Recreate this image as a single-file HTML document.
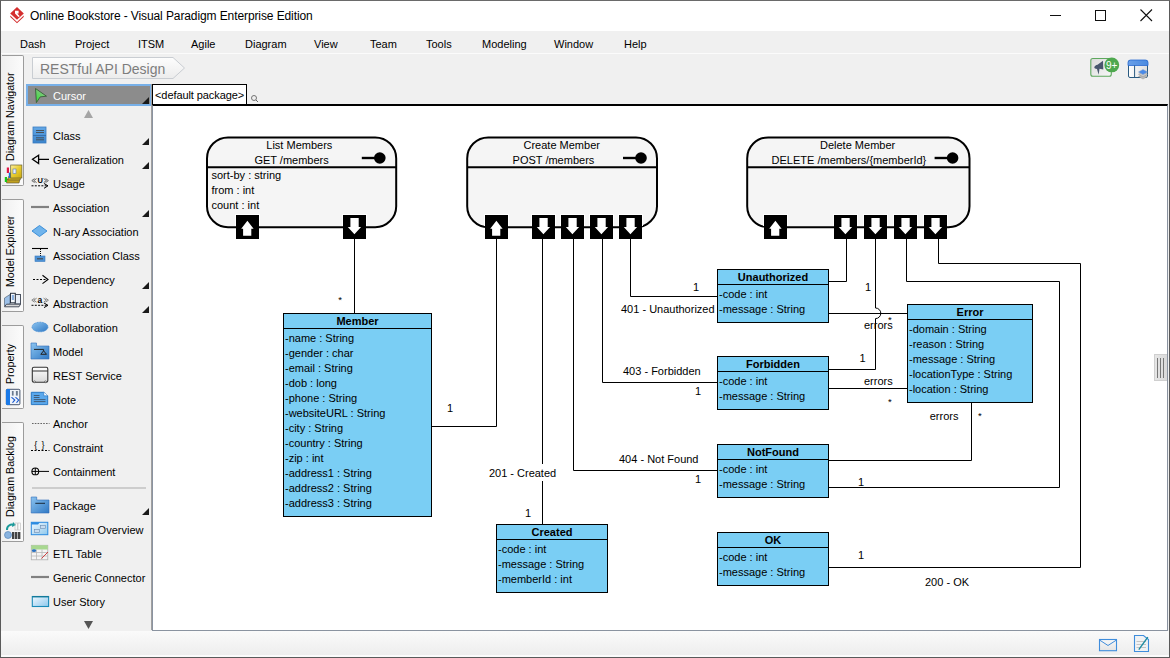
<!DOCTYPE html>
<html><head><meta charset="utf-8">
<style>
*{margin:0;padding:0;box-sizing:border-box}
html,body{width:1170px;height:658px;overflow:hidden;background:#f0f0f0;font-family:"Liberation Sans",sans-serif;color:#000}
.a{position:absolute;white-space:nowrap}
#frame{position:absolute;left:0;top:0;width:1170px;height:658px;border:1px solid #5a5a5a;border-top-color:#6a6a6a}
#title{left:1px;top:1px;width:1168px;height:30px;background:#fff}
.menu{font-size:11px;top:38px}
.pal{font-size:11px;left:53px;line-height:13px}
.tab{position:absolute;left:2px;width:22px;background:linear-gradient(90deg,#f0f0f0,#fbfbfb);border:1px solid #9c9c9c;border-left:none;border-radius:0 2px 2px 0}
.vt{position:absolute;font-size:11px;transform-origin:0 0;transform:rotate(-90deg) scaleX(0.965)}
.tri{position:absolute;width:0;height:0;border-left:7px solid transparent;border-bottom:7px solid #1a1a1a;left:142px}
</style></head><body>
<div id="title" class="a"></div>
<div id="frame"></div>

<!-- title text -->
<svg class="a" style="left:0;top:0" width="30" height="30">
 <path d="M17 7 L23.8 13.4 L17 19.8 L10.2 13.4 Z" fill="#d42e2e"/>
 <path d="M10.3 15.6 L17 21.9 L23.7 15.6 L23.7 17 L17 23.3 L10.3 17 Z" fill="#d42e2e"/>
 <path d="M15 10.8 H18.6 V13.4 H17.2 L19.8 16.2 L18.4 17 L15 13.6 Z" fill="#fff"/>
</svg>
<div class="a" style="left:30px;top:9px;font-size:12px;color:#000;letter-spacing:-0.1px">Online Bookstore - Visual Paradigm Enterprise Edition</div>

<!-- window controls -->
<div class="a" style="left:1050px;top:15px;width:11px;height:1px;background:#111"></div>
<div class="a" style="left:1095px;top:10px;width:11px;height:11px;border:1px solid #111"></div>
<svg class="a" style="left:1140px;top:9px" width="13" height="13"><path d="M0.5 0.5 L12 12 M12 0.5 L0.5 12" stroke="#111" stroke-width="1.1"/></svg>

<!-- menu -->
<div class="a menu" style="left:20px">Dash</div>
<div class="a menu" style="left:75px">Project</div>
<div class="a menu" style="left:138px">ITSM</div>
<div class="a menu" style="left:191px">Agile</div>
<div class="a menu" style="left:245px">Diagram</div>
<div class="a menu" style="left:314px">View</div>
<div class="a menu" style="left:370px">Team</div>
<div class="a menu" style="left:426px">Tools</div>
<div class="a menu" style="left:482px">Modeling</div>
<div class="a menu" style="left:554px">Window</div>
<div class="a menu" style="left:624px">Help</div>
<div class="a" style="left:1px;top:53px;width:1168px;height:1px;background:#fbfbfb"></div>

<!-- breadcrumb -->
<svg class="a" style="left:30px;top:56px" width="170" height="26">
 <defs><linearGradient id="bcg" x1="0" y1="0" x2="0" y2="1"><stop offset="0" stop-color="#fdfdfd"/><stop offset="1" stop-color="#ececec"/></linearGradient></defs>
 <path d="M2.5 1.5 H143 L154.5 12 L143 22.5 H2.5 Z" fill="url(#bcg)" stroke="#c9cdd2"/>
</svg>
<div class="a" style="left:40px;top:61px;font-size:14px;color:#7d7d7d">RESTful API Design</div>

<!-- top right icons -->
<svg class="a" style="left:1080px;top:50px" width="80" height="32">
 <defs>
  <linearGradient id="mg" x1="0" y1="0" x2="1" y2="1"><stop offset="0" stop-color="#dcdcdc"/><stop offset="1" stop-color="#f6f6f6"/></linearGradient>
  <linearGradient id="tb" x1="0" y1="0" x2="1" y2="0"><stop offset="0" stop-color="#6aa0e8"/><stop offset="1" stop-color="#4a8ae0"/></linearGradient>
  <linearGradient id="wb" x1="0" y1="0" x2="1" y2="0"><stop offset="0" stop-color="#ffffff"/><stop offset="1" stop-color="#dedede"/></linearGradient>
 </defs>
 <rect x="10.8" y="8.5" width="20.5" height="17.8" rx="2" fill="url(#mg)" stroke="#5ea85e" stroke-width="1.1"/>
 <path d="M14.3 17.6 C14.3 15.8 16 15.2 17.5 14.8 L23 10.8 L23.3 19.6 L19.5 18.8 L18.6 24.8 L17 19 C15.5 18.8 14.3 18.6 14.3 17.6 Z" fill="#48566e"/>
 <circle cx="31.8" cy="14.9" r="7.4" fill="#4ea84e"/>
 <text x="31.6" y="18.6" font-size="10" fill="#fff" text-anchor="middle" font-family="Liberation Sans">9+</text>
 <rect x="48.5" y="10.5" width="19" height="17" rx="1.5" fill="url(#wb)" stroke="#2a5a80" stroke-width="1"/>
 <path d="M48 15.5 V12.5 Q48 10 50.5 10 H65.5 Q68 10 68 12.5 V15.5 Z" fill="url(#tb)" stroke="#2a6ad0" stroke-width="0.8"/>
 <line x1="54.6" y1="15.5" x2="54.6" y2="28" stroke="#2a5a80" stroke-width="1"/>
 <path d="M58.5 26.5 l4.5-2.5 4.5 2.5 -4.5 2.5z" fill="#b8b8b8" stroke="#999" stroke-width="0.5"/>
 <path d="M58.5 24.3 l4.5-2.5 4.5 2.5 -4.5 2.5z" fill="#c8c8c8" stroke="#999" stroke-width="0.5"/>
 <path d="M58.5 22 l4.5-2.5 4.5 2.5 -4.5 2.5z" fill="#4a8ae8" stroke="#7a9ac8" stroke-width="0.5"/>
</svg>

<!-- left vertical tabs -->
<div class="tab" style="top:55px;height:131px"></div>
<div class="vt" style="left:4px;top:161px">Diagram Navigator</div>
<div class="tab" style="top:199px;height:113px"></div>
<div class="vt" style="left:4px;top:287px">Model Explorer</div>
<div class="tab" style="top:325px;height:84px"></div>
<div class="vt" style="left:4px;top:384px">Property</div>
<div class="tab" style="top:422px;height:120px"></div>
<div class="vt" style="left:4px;top:517px">Diagram Backlog</div>
<svg class="a" style="left:0;top:0" width="26" height="545">
<!-- navigator -->
<defs><linearGradient id="yb" x1="0" y1="0" x2="1" y2="1"><stop offset="0" stop-color="#fff2a0"/><stop offset="0.5" stop-color="#e8cc30"/><stop offset="1" stop-color="#c8a810"/></linearGradient></defs>
<path d="M7 179 H20 L19 183 H6.5 Z" fill="#c0a020" stroke="#5a5030" stroke-width="0.6"/>
<path d="M8.5 176.5 H21 L20 180 H8 Z" fill="#d0b020" stroke="#5a5030" stroke-width="0.6"/>
<rect x="4.8" y="177" width="2.2" height="5" fill="#18c818"/>
<rect x="6.8" y="167.5" width="2.2" height="5.5" fill="#e01848"/>
<rect x="8.8" y="172.6" width="2.2" height="5.4" fill="#1870e0"/>
<rect x="10.7" y="165" width="11.2" height="13" fill="url(#yb)" stroke="#6a6030" stroke-width="0.7"/>
<rect x="13" y="169" width="3" height="4.6" fill="#e8f0ff" stroke="#5a7ab0" stroke-width="0.6"/>
<!-- model explorer -->
<path d="M4.5 298 L10 294.5 L10 304 L4.5 306 Z" fill="#9cc0e8" stroke="#55657a" stroke-width="0.7"/>
<rect x="15" y="294.5" width="5.5" height="9.5" fill="#e8eef6" stroke="#3a4250" stroke-width="0.9"/>
<rect x="10.5" y="293.3" width="4.8" height="9.5" fill="#f4f8fc" stroke="#2a3240" stroke-width="1"/>
<rect x="11.8" y="295" width="2.2" height="5" fill="#8ab0e0"/>
<path d="M4.5 306.8 L6.5 304.2 H20.5 L19 306.8 Z" fill="#d8d8d8" stroke="#3a4250" stroke-width="0.9"/>
<!-- property -->
<rect x="6.3" y="389.3" width="13.6" height="15.4" rx="1" fill="#f0f4fa" stroke="#34445e" stroke-width="0.9"/>
<path d="M7.5 389 H10 V405 H7.5 Q6 405 6 403.5 V390.5 Q6 389 7.5 389 Z" fill="#1a7ae8"/>
<rect x="11.9" y="391" width="1.7" height="4.6" fill="#6a7a90"/>
<rect x="15.9" y="391" width="1.9" height="4.6" fill="#6a7a90"/>
<path d="M10.6 397.2 L14 400 L11.8 402.8 H13.2 L15.6 400 L12.4 397.2 Z" fill="#1a5ad0"/>
<path d="M14.6 397.2 L18 400 L15.8 402.8 H17.2 L19.4 400 L16.4 397.2 Z" fill="#1a5ad0"/>
<!-- backlog -->
<path d="M7 530 a5 5 0 0 1 7 -5" fill="none" stroke="#1a9a9a" stroke-width="2"/>
<path d="M13 522 l3 3 -4 2z" fill="#1a9a9a"/>
<circle cx="8" cy="535" r="3.5" fill="#8ab4e0" stroke="#4a7ab0" stroke-width="0.6"/>
<rect x="12" y="532" width="2.4" height="7" fill="#444"/><rect x="15" y="532" width="2.4" height="7" fill="#444"/><rect x="18" y="532" width="2.4" height="7" fill="#444"/>
<rect x="15" y="523" width="2.4" height="7" fill="none" stroke="#bbb" stroke-width="0.6"/><rect x="18" y="523" width="2.4" height="7" fill="none" stroke="#bbb" stroke-width="0.6"/>
</svg>

<!-- palette -->
<div class="a" style="left:26px;top:84px;width:126px;height:22px;background:#8c8c8c;border:2px solid #78b0e8"></div>
<svg class="a" style="left:0;top:0" width="60" height="110">
 <defs><linearGradient id="cg" x1="0" y1="1" x2="0.6" y2="0"><stop offset="0" stop-color="#2ee82e"/><stop offset="1" stop-color="#8fbf8f"/></linearGradient></defs>
 <path d="M35.5 88.5 L46.5 96.2 L40.2 96.9 L36.4 102.6 Z" fill="url(#cg)" stroke="#3a5a3a" stroke-width="0.9" stroke-linejoin="round"/>
</svg>
<div class="a pal" style="top:90px;color:#fff">Cursor</div>
<div class="tri" style="top:97px"></div>
<svg class="a" style="left:84px;top:110px" width="9" height="8"><path d="M0 8 L4.5 0 L9 8Z" fill="#a5a5a5"/></svg>

<div class="a pal" style="top:130px">Class</div>
<div class="tri" style="top:138px"></div>
<div class="a pal" style="top:154px">Generalization</div>
<div class="tri" style="top:162px"></div>
<div class="a pal" style="top:178px">Usage</div>
<div class="a pal" style="top:202px">Association</div>
<div class="tri" style="top:210px"></div>
<div class="a pal" style="top:226px">N-ary Association</div>
<div class="a pal" style="top:250px">Association Class</div>
<div class="a pal" style="top:274px">Dependency</div>
<div class="tri" style="top:282px"></div>
<div class="a pal" style="top:298px">Abstraction</div>
<div class="tri" style="top:306px"></div>
<div class="a pal" style="top:322px">Collaboration</div>
<div class="a pal" style="top:346px">Model</div>
<div class="a pal" style="top:370px">REST Service</div>
<div class="a pal" style="top:394px">Note</div>
<div class="a pal" style="top:418px">Anchor</div>
<div class="a pal" style="top:442px">Constraint</div>
<div class="a pal" style="top:466px">Containment</div>
<div class="a pal" style="top:500px">Package</div>
<div class="tri" style="top:508px"></div>
<div class="a pal" style="top:524px">Diagram Overview</div>
<div class="a pal" style="top:548px">ETL Table</div>
<div class="a pal" style="top:572px">Generic Connector</div>
<div class="a pal" style="top:596px">User Story</div>
<div class="a" style="left:32px;top:487px;width:114px;height:2px;background:#cdcdcd"></div>
<svg class="a" style="left:84px;top:621px" width="9" height="8"><path d="M0 0 L9 0 L4.5 8Z" fill="#555"/></svg>
<div class="a" style="left:151px;top:84px;width:1px;height:546px;background:#a0a0a0"></div>
<svg class="a" style="left:0;top:0" width="60" height="640">
<defs>
<linearGradient id="gb" x1="0" y1="0" x2="1" y2="1"><stop offset="0" stop-color="#8cc4f0"/><stop offset="1" stop-color="#2f78c4"/></linearGradient>
<linearGradient id="gcls" x1="0" y1="0" x2="0" y2="1"><stop offset="0" stop-color="#64a8e6"/><stop offset="1" stop-color="#3a84cc"/></linearGradient>
<linearGradient id="gus" x1="0" y1="0" x2="1" y2="1"><stop offset="0" stop-color="#f0f8ff"/><stop offset="1" stop-color="#8ec8ec"/></linearGradient>
<linearGradient id="grest" x1="0" y1="0" x2="0" y2="1"><stop offset="0" stop-color="#ffffff"/><stop offset="1" stop-color="#d8d8d8"/></linearGradient>
</defs>
<!-- Class -->
<rect x="33" y="127" width="13" height="16" fill="url(#gcls)" stroke="#3a7cc0" stroke-width="0.8"/>
<line x1="33" y1="135.5" x2="46" y2="135.5" stroke="#2f6aa8" stroke-width="0.8"/>
<path d="M36 130.5 H44 M36 132.5 H44 M36 137.8 H44 M36 139.8 H44" stroke="#4a4a4a" stroke-width="0.9"/>
<!-- Generalization -->
<path d="M38.6 155.2 L32.5 159.3 L38.6 163.5 Z M38.6 159.3 H49" fill="none" stroke="#000" stroke-width="1.3"/>
<!-- Usage -->
<path d="M34.6 178.6 L31.8 180.6 L34.6 182.6 M36.6 178.6 L33.8 180.6 L36.6 182.6 M43.6 178.6 L46.4 180.6 L43.6 182.6 M45.6 178.6 L48.4 180.6 L45.6 182.6" fill="none" stroke="#555" stroke-width="0.9"/>
<text x="37.4" y="183" font-family="Liberation Sans" font-size="7.5" font-weight="bold" fill="#000">U</text>
<path d="M31.5 185.8 H47" stroke="#000" stroke-width="1" stroke-dasharray="2 1.3"/>
<path d="M44 183.5 L48 185.8 L44 188.3" fill="none" stroke="#000" stroke-width="1"/>
<!-- Association -->
<line x1="31" y1="207" x2="49" y2="207" stroke="#808080" stroke-width="2.2"/>
<!-- N-ary -->
<path d="M39.5 225.5 L47 231 L39.5 236.5 L32 231 Z" fill="#70b4ec" stroke="#3d8fd8" stroke-width="1"/>
<!-- Association Class -->
<line x1="32" y1="248.5" x2="48" y2="248.5" stroke="#000" stroke-width="1.1"/>
<path d="M40.5 249 V256" stroke="#000" stroke-width="1" stroke-dasharray="1 1"/>
<rect x="35" y="256" width="10" height="5.5" fill="#4d92d6" stroke="#3a7cc0" stroke-width="0.6"/>
<line x1="37" y1="258.8" x2="43" y2="258.8" stroke="#444" stroke-width="1.1"/>
<!-- Dependency -->
<path d="M33 279.5 H47.5" stroke="#000" stroke-width="1" stroke-dasharray="2 1.5"/>
<path d="M42.5 275.3 L48 279.5 L42.5 283.6" fill="none" stroke="#000" stroke-width="1.1"/>
<!-- Abstraction -->
<path d="M34.6 298.2 L31.8 300.2 L34.6 302.2 M36.6 298.2 L33.8 300.2 L36.6 302.2 M43.6 298.2 L46.4 300.2 L43.6 302.2 M45.6 298.2 L48.4 300.2 L45.6 302.2" fill="none" stroke="#777" stroke-width="0.9"/>
<text x="37.5" y="302.8" font-family="Liberation Sans" font-size="8.5" font-weight="bold" fill="#000">a</text>
<path d="M31.5 305.3 H47" stroke="#000" stroke-width="1" stroke-dasharray="2 1.3"/>
<path d="M44 303 L48 305.3 L44 307.6" fill="none" stroke="#000" stroke-width="1"/>
<!-- Collaboration -->
<ellipse cx="40" cy="327" rx="8" ry="4.8" fill="url(#gb)" stroke="#3a85d0" stroke-width="0.8" stroke-dasharray="1 0.6"/>
<!-- Model -->
<path d="M31 343 H36.5 V346 H49 V359 H31 Z" fill="url(#gb)" stroke="#2f6db8" stroke-width="0.6"/>
<path d="M34 349.4 H43.6 V351" fill="none" stroke="#222" stroke-width="1"/>
<path d="M43.6 350.8 L46.5 354.3 H40.8 Z" fill="none" stroke="#222" stroke-width="1"/>
<!-- REST Service -->
<rect x="32.3" y="367.3" width="15.5" height="15" rx="1.6" fill="url(#grest)" stroke="#333" stroke-width="1.1"/>
<line x1="32.3" y1="371" x2="47.8" y2="371" stroke="#333" stroke-width="1"/>
<circle cx="34.5" cy="381.8" r="0.9" fill="#fff" stroke="#333" stroke-width="0.6"/>
<circle cx="45.5" cy="381.8" r="0.9" fill="#fff" stroke="#333" stroke-width="0.6"/>
<!-- Note -->
<path d="M31.3 392.3 H43.8 L47.7 395.8 V404.6 H31.3 Z" fill="#5aa8ec" stroke="#1e6fc0" stroke-width="0.9"/>
<path d="M43.8 392.3 V395.8 H47.7" fill="#fff" stroke="#1e6fc0" stroke-width="0.6"/>
<path d="M33.8 395.5 H39.5 M33.8 397.5 H39.5 M33.8 399.6 H45.5 M33.8 401.6 H45.5" stroke="#3c4a5a" stroke-width="0.8"/>
<!-- Anchor -->
<path d="M32 423.5 H49.5" stroke="#555" stroke-width="0.9" stroke-dasharray="1.6 1.2"/>
<!-- Constraint -->
<text x="34.3" y="447.8" font-family="Liberation Sans" font-size="9" fill="#000">{</text>
<text x="41.5" y="447.8" font-family="Liberation Sans" font-size="9" fill="#000">}</text>
<path d="M31 450.5 H49.5" stroke="#000" stroke-width="1" stroke-dasharray="2 1.5"/>
<!-- Containment -->
<circle cx="35.3" cy="471.4" r="3.4" fill="none" stroke="#000" stroke-width="1.1"/>
<path d="M31.9 471.4 H38.7 M35.3 468 V474.8 M38.7 471.4 H49" stroke="#000" stroke-width="1"/>
<!-- Package -->
<path d="M31.2 497 H36.7 V500 H49 V513 H31.2 Z" fill="url(#gb)" stroke="#2f6db8" stroke-width="0.6"/>
<line x1="35.3" y1="503.3" x2="45" y2="503.3" stroke="#1a2a3a" stroke-width="1"/>
<!-- Diagram Overview -->
<rect x="31.3" y="522.3" width="16.5" height="12.4" fill="url(#gus)" stroke="#2a8ae0" stroke-width="1"/>
<path d="M31.3 522.3 H40 L38 524.5 H31.3 Z" fill="#2a8ae0"/>
<rect x="40.5" y="525.6" width="5" height="3" fill="#c8dcf0" stroke="#6a8ab0" stroke-width="0.6"/>
<rect x="34.5" y="529.6" width="5" height="3" fill="#c8dcf0" stroke="#6a8ab0" stroke-width="0.6"/>
<!-- ETL Table -->
<rect x="31.3" y="545.3" width="16.5" height="14.5" fill="#f4f4f4" stroke="#b0b0b0" stroke-width="0.8"/>
<rect x="31.3" y="545.3" width="16.5" height="4.2" fill="#a8d890"/>
<path d="M31.3 552.5 H47.8 M31.3 556 H47.8 M36.5 549.5 V559.8 M42 549.5 V559.8" stroke="#b8b8b8" stroke-width="0.8"/>
<ellipse cx="34" cy="550.7" rx="2.2" ry="1.4" fill="#2a70c0"/>
<path d="M41.5 558.5 L48 552" stroke="#d04040" stroke-width="1"/>
<!-- Generic Connector -->
<line x1="31" y1="577" x2="49" y2="577" stroke="#808080" stroke-width="2.2"/>
<!-- User Story -->
<rect x="32.3" y="596.5" width="16.3" height="10" fill="url(#gus)" stroke="#1a8ab8" stroke-width="1.1"/>
<line x1="32.3" y1="596.7" x2="48.6" y2="596.7" stroke="#137a9a" stroke-width="1.4"/>
</svg>

<!-- canvas -->
<div class="a" style="left:152px;top:104px;width:1016px;height:527px;background:#fff;border-left:1px solid #8a93a0;border-right:1px solid #8a93a0;border-bottom:1px solid #8a93a0;border-top:2px solid #000"></div>
<div class="a" style="left:152px;top:84px;width:95px;height:21px;background:#fff;border:1.5px solid #000;font-size:11px;padding:4px 0 0 2px;letter-spacing:-0.08px">&lt;default package&gt;</div>
<svg class="a" style="left:250px;top:94px" width="9" height="9"><circle cx="4" cy="4" r="2.5" fill="none" stroke="#666" stroke-width="0.9"/><path d="M6 6 L8 8" stroke="#666"/></svg>

<!-- scrollbar grip -->
<div class="a" style="left:1154px;top:354px;width:13px;height:27px;background:linear-gradient(90deg,#e6e6e6,#dadada);border:1px solid #cfcfcf;border-right:none"></div><div class="a" style="left:1157px;top:358px;width:1px;height:20px;background:#777"></div><div class="a" style="left:1160px;top:358px;width:1px;height:20px;background:#777"></div><div class="a" style="left:1163px;top:358px;width:1px;height:20px;background:#777"></div>

<div class="a" style="left:1px;top:631px;width:1168px;height:25px;background:linear-gradient(#fafafa,#ededed)"></div>
<div class="a" style="left:1px;top:655px;width:1168px;height:2px;background:#fbfbfb"></div>
<!-- status icons -->
<svg class="a" style="left:1098px;top:638px" width="20" height="15"><defs><linearGradient id="ml" x1="0" y1="0" x2="0" y2="1"><stop offset="0" stop-color="#f8f8f8"/><stop offset="1" stop-color="#e4e4e4"/></linearGradient></defs><rect x="1.5" y="1.5" width="17" height="11.2" fill="url(#ml)" stroke="#3f8ddc" stroke-width="1.1"/><path d="M1.5 2 L10 7.5 L18.5 2" fill="none" stroke="#3f8ddc" stroke-width="1"/></svg>
<svg class="a" style="left:1133px;top:634px" width="18" height="19"><path d="M1.5 1.5 H10.5 L15.5 5.5 V17.5 H1.5Z" fill="#f0f2f4" stroke="#3f8ddc" stroke-width="1.1"/><path d="M3.5 7.5 H13 M3.5 10.5 H13 M3.5 13.5 H13" stroke="#c4c4c4" stroke-width="1.2"/><path d="M5.8 15.6 L14.8 3.2" stroke="#1a8aa0" stroke-width="1.4"/></svg>

<svg class="a" style="left:0;top:0" width="1170" height="658"><rect x="207" y="137.4" width="189.2" height="89.79999999999998" rx="21" ry="21" fill="#f5f5f5" stroke="#000" stroke-width="2"/>
<line x1="207" y1="167.3" x2="396.2" y2="167.3" stroke="#000" stroke-width="2"/>
<text x="266.3" y="148.7" font-family="Liberation Sans" font-size="11" fill="#000" text-anchor="start" >List Members</text>
<text x="254.4" y="163.6" font-family="Liberation Sans" font-size="11" fill="#000" text-anchor="start" >GET /members</text>
<line x1="361.8" y1="158" x2="379.8" y2="158" stroke="#000" stroke-width="2.4"/>
<circle cx="379.8" cy="158" r="5.8" fill="#000"/>
<text x="211.5" y="179" font-family="Liberation Sans" font-size="11" fill="#000" text-anchor="start" >sort-by : string</text>
<text x="211.5" y="194" font-family="Liberation Sans" font-size="11" fill="#000" text-anchor="start" >from : int</text>
<text x="211.5" y="209" font-family="Liberation Sans" font-size="11" fill="#000" text-anchor="start" >count : int</text>
<rect x="467.2" y="137.4" width="189.8" height="89.79999999999998" rx="21" ry="21" fill="#f5f5f5" stroke="#000" stroke-width="2"/>
<line x1="467.2" y1="167.3" x2="657" y2="167.3" stroke="#000" stroke-width="2"/>
<text x="523.5" y="148.7" font-family="Liberation Sans" font-size="11" fill="#000" text-anchor="start" >Create Member</text>
<text x="512.6" y="163.6" font-family="Liberation Sans" font-size="11" fill="#000" text-anchor="start" >POST /members</text>
<line x1="623" y1="158" x2="641" y2="158" stroke="#000" stroke-width="2.4"/>
<circle cx="641" cy="158" r="5.8" fill="#000"/>
<rect x="747.2" y="137.4" width="222.29999999999995" height="89.79999999999998" rx="21" ry="21" fill="#f5f5f5" stroke="#000" stroke-width="2"/>
<line x1="747.2" y1="167.3" x2="969.5" y2="167.3" stroke="#000" stroke-width="2"/>
<text x="820" y="148.7" font-family="Liberation Sans" font-size="11" fill="#000" text-anchor="start" >Delete Member</text>
<text x="771.6" y="163.6" font-family="Liberation Sans" font-size="11" fill="#000" text-anchor="start" >DELETE /members/{memberId}</text>
<line x1="934.6" y1="158" x2="952.6" y2="158" stroke="#000" stroke-width="2.4"/>
<circle cx="952.6" cy="158" r="5.8" fill="#000"/>
<rect x="235" y="214" width="25" height="12" fill="#fff"/>
<rect x="236" y="215" width="23" height="24" fill="#000"/>
<path d="M247.4 220.8 L253.6 228.7 L251.3 228.7 L251.3 235.7 L243.1 235.7 L243.1 228.7 L241.2 228.7 Z" fill="#fff"/>
<rect x="342" y="214" width="25" height="12" fill="#fff"/>
<rect x="343" y="215" width="23" height="24" fill="#000"/>
<path d="M350.4 218 L358.7 218 L358.7 227 L361.1 227 L354.4 234.2 L347.8 227 L350.4 227 Z" fill="#fff"/>
<rect x="484" y="214" width="25" height="12" fill="#fff"/>
<rect x="485" y="215" width="23" height="24" fill="#000"/>
<path d="M496.4 220.8 L502.6 228.7 L500.3 228.7 L500.3 235.7 L492.1 235.7 L492.1 228.7 L490.2 228.7 Z" fill="#fff"/>
<rect x="531" y="214" width="25" height="12" fill="#fff"/>
<rect x="532" y="215" width="23" height="24" fill="#000"/>
<path d="M539.4 218 L547.7 218 L547.7 227 L550.1 227 L543.4 234.2 L536.8 227 L539.4 227 Z" fill="#fff"/>
<rect x="560" y="214" width="25" height="12" fill="#fff"/>
<rect x="561" y="215" width="23" height="24" fill="#000"/>
<path d="M568.4 218 L576.7 218 L576.7 227 L579.1 227 L572.4 234.2 L565.8 227 L568.4 227 Z" fill="#fff"/>
<rect x="589" y="214" width="25" height="12" fill="#fff"/>
<rect x="590" y="215" width="23" height="24" fill="#000"/>
<path d="M597.4 218 L605.7 218 L605.7 227 L608.1 227 L601.4 234.2 L594.8 227 L597.4 227 Z" fill="#fff"/>
<rect x="618" y="214" width="25" height="12" fill="#fff"/>
<rect x="619" y="215" width="23" height="24" fill="#000"/>
<path d="M626.4 218 L634.7 218 L634.7 227 L637.1 227 L630.4 234.2 L623.8 227 L626.4 227 Z" fill="#fff"/>
<rect x="763" y="214" width="25" height="12" fill="#fff"/>
<rect x="764" y="215" width="23" height="24" fill="#000"/>
<path d="M775.4 220.8 L781.6 228.7 L779.3 228.7 L779.3 235.7 L771.1 235.7 L771.1 228.7 L769.2 228.7 Z" fill="#fff"/>
<rect x="833" y="214" width="25" height="12" fill="#fff"/>
<rect x="834" y="215" width="23" height="24" fill="#000"/>
<path d="M841.4 218 L849.7 218 L849.7 227 L852.1 227 L845.4 234.2 L838.8 227 L841.4 227 Z" fill="#fff"/>
<rect x="863" y="214" width="25" height="12" fill="#fff"/>
<rect x="864" y="215" width="23" height="24" fill="#000"/>
<path d="M871.4 218 L879.7 218 L879.7 227 L882.1 227 L875.4 234.2 L868.8 227 L871.4 227 Z" fill="#fff"/>
<rect x="893" y="214" width="25" height="12" fill="#fff"/>
<rect x="894" y="215" width="23" height="24" fill="#000"/>
<path d="M901.4 218 L909.7 218 L909.7 227 L912.1 227 L905.4 234.2 L898.8 227 L901.4 227 Z" fill="#fff"/>
<rect x="923" y="214" width="25" height="12" fill="#fff"/>
<rect x="924" y="215" width="23" height="24" fill="#000"/>
<path d="M931.4 218 L939.7 218 L939.7 227 L942.1 227 L935.4 234.2 L928.8 227 L931.4 227 Z" fill="#fff"/>
<path d="M354.5 239 L354.5 313" fill="none" stroke="#000" stroke-width="1"/>
<path d="M432 426.5 L496.5 426.5 L496.5 239" fill="none" stroke="#000" stroke-width="1"/>
<path d="M542.5 239 L542.5 464" fill="none" stroke="#000" stroke-width="1"/>
<path d="M542.5 481 L542.5 524" fill="none" stroke="#000" stroke-width="1"/>
<path d="M573.5 239 L573.5 470.5 L717 470.5" fill="none" stroke="#000" stroke-width="1"/>
<path d="M602.5 239 L602.5 382.5 L717 382.5" fill="none" stroke="#000" stroke-width="1"/>
<path d="M630.5 239 L630.5 296.5 L717 296.5" fill="none" stroke="#000" stroke-width="1"/>
<path d="M846.5 239 L846.5 281.5 L828 281.5" fill="none" stroke="#000" stroke-width="1"/>
<path d="M875.5 239 L875.5 308 A5.3 5.3 0 0 1 875.5 318.6 L875.5 369.5 L828 369.5" fill="none" stroke="#000" stroke-width="1"/>
<path d="M906.5 239 L906.5 281.5 L1059.5 281.5 L1059.5 487.5 L828 487.5" fill="none" stroke="#000" stroke-width="1"/>
<path d="M938.5 239 L938.5 263.5 L1080.5 263.5 L1080.5 567.5 L828 567.5" fill="none" stroke="#000" stroke-width="1"/>
<path d="M828 313.5 L907 313.5" fill="none" stroke="#000" stroke-width="1"/>
<path d="M828 388.5 L907 388.5" fill="none" stroke="#000" stroke-width="1"/>
<path d="M971.5 402 L971.5 460.5 L828 460.5" fill="none" stroke="#000" stroke-width="1"/>
<rect x="283.5" y="313.5" width="148" height="203" fill="#7acef4" stroke="#000" stroke-width="1"/>
<line x1="283" y1="328.5" x2="432" y2="328.5" stroke="#000" stroke-width="1"/>
<text x="357.5" y="325" font-family="Liberation Sans" font-size="11" font-weight="bold" fill="#000" text-anchor="middle" >Member</text>
<text x="285" y="342" font-family="Liberation Sans" font-size="11" fill="#000" text-anchor="start" >-name : String</text>
<text x="285" y="357" font-family="Liberation Sans" font-size="11" fill="#000" text-anchor="start" >-gender : char</text>
<text x="285" y="372" font-family="Liberation Sans" font-size="11" fill="#000" text-anchor="start" >-email : String</text>
<text x="285" y="387" font-family="Liberation Sans" font-size="11" fill="#000" text-anchor="start" >-dob : long</text>
<text x="285" y="402" font-family="Liberation Sans" font-size="11" fill="#000" text-anchor="start" >-phone : String</text>
<text x="285" y="417" font-family="Liberation Sans" font-size="11" fill="#000" text-anchor="start" >-websiteURL : String</text>
<text x="285" y="432" font-family="Liberation Sans" font-size="11" fill="#000" text-anchor="start" >-city : String</text>
<text x="285" y="447" font-family="Liberation Sans" font-size="11" fill="#000" text-anchor="start" >-country : String</text>
<text x="285" y="462" font-family="Liberation Sans" font-size="11" fill="#000" text-anchor="start" >-zip : int</text>
<text x="285" y="477" font-family="Liberation Sans" font-size="11" fill="#000" text-anchor="start" >-address1 : String</text>
<text x="285" y="492" font-family="Liberation Sans" font-size="11" fill="#000" text-anchor="start" >-address2 : String</text>
<text x="285" y="507" font-family="Liberation Sans" font-size="11" fill="#000" text-anchor="start" >-address3 : String</text>
<rect x="717.5" y="269.5" width="111" height="53" fill="#7acef4" stroke="#000" stroke-width="1"/>
<line x1="717" y1="284.5" x2="829" y2="284.5" stroke="#000" stroke-width="1"/>
<text x="773.0" y="281" font-family="Liberation Sans" font-size="11" font-weight="bold" fill="#000" text-anchor="middle" >Unauthorized</text>
<text x="719" y="298.2" font-family="Liberation Sans" font-size="11" fill="#000" text-anchor="start" >-code : int</text>
<text x="719" y="313.2" font-family="Liberation Sans" font-size="11" fill="#000" text-anchor="start" >-message : String</text>
<rect x="717.5" y="356.5" width="111" height="53" fill="#7acef4" stroke="#000" stroke-width="1"/>
<line x1="717" y1="371.5" x2="829" y2="371.5" stroke="#000" stroke-width="1"/>
<text x="773.0" y="368" font-family="Liberation Sans" font-size="11" font-weight="bold" fill="#000" text-anchor="middle" >Forbidden</text>
<text x="719" y="385" font-family="Liberation Sans" font-size="11" fill="#000" text-anchor="start" >-code : int</text>
<text x="719" y="400" font-family="Liberation Sans" font-size="11" fill="#000" text-anchor="start" >-message : String</text>
<rect x="907.5" y="304.5" width="125" height="98" fill="#7acef4" stroke="#000" stroke-width="1"/>
<line x1="907" y1="319.5" x2="1033" y2="319.5" stroke="#000" stroke-width="1"/>
<text x="970.0" y="316" font-family="Liberation Sans" font-size="11" font-weight="bold" fill="#000" text-anchor="middle" >Error</text>
<text x="909" y="333.2" font-family="Liberation Sans" font-size="11" fill="#000" text-anchor="start" >-domain : String</text>
<text x="909" y="348.2" font-family="Liberation Sans" font-size="11" fill="#000" text-anchor="start" >-reason : String</text>
<text x="909" y="363.2" font-family="Liberation Sans" font-size="11" fill="#000" text-anchor="start" >-message : String</text>
<text x="909" y="378.2" font-family="Liberation Sans" font-size="11" fill="#000" text-anchor="start" >-locationType : String</text>
<text x="909" y="393.2" font-family="Liberation Sans" font-size="11" fill="#000" text-anchor="start" >-location : String</text>
<rect x="717.5" y="444.5" width="111" height="53" fill="#7acef4" stroke="#000" stroke-width="1"/>
<line x1="717" y1="459.5" x2="829" y2="459.5" stroke="#000" stroke-width="1"/>
<text x="773.0" y="456" font-family="Liberation Sans" font-size="11" font-weight="bold" fill="#000" text-anchor="middle" >NotFound</text>
<text x="719" y="473" font-family="Liberation Sans" font-size="11" fill="#000" text-anchor="start" >-code : int</text>
<text x="719" y="488" font-family="Liberation Sans" font-size="11" fill="#000" text-anchor="start" >-message : String</text>
<rect x="717.5" y="532.5" width="111" height="53" fill="#7acef4" stroke="#000" stroke-width="1"/>
<line x1="717" y1="547.5" x2="829" y2="547.5" stroke="#000" stroke-width="1"/>
<text x="773.0" y="544" font-family="Liberation Sans" font-size="11" font-weight="bold" fill="#000" text-anchor="middle" >OK</text>
<text x="719" y="561" font-family="Liberation Sans" font-size="11" fill="#000" text-anchor="start" >-code : int</text>
<text x="719" y="576" font-family="Liberation Sans" font-size="11" fill="#000" text-anchor="start" >-message : String</text>
<rect x="496.5" y="524.5" width="111" height="68" fill="#7acef4" stroke="#000" stroke-width="1"/>
<line x1="496" y1="539.5" x2="608" y2="539.5" stroke="#000" stroke-width="1"/>
<text x="552.0" y="536" font-family="Liberation Sans" font-size="11" font-weight="bold" fill="#000" text-anchor="middle" >Created</text>
<text x="498" y="552.7" font-family="Liberation Sans" font-size="11" fill="#000" text-anchor="start" >-code : int</text>
<text x="498" y="567.7" font-family="Liberation Sans" font-size="11" fill="#000" text-anchor="start" >-message : String</text>
<text x="498" y="582.7" font-family="Liberation Sans" font-size="11" fill="#000" text-anchor="start" >-memberId : int</text>
<text x="338.2" y="303" font-family="Liberation Sans" font-size="9.5" fill="#000" text-anchor="start" >*</text>
<text x="447" y="412" font-family="Liberation Sans" font-size="11" fill="#000" text-anchor="start" >1</text>
<text x="488.9" y="476.5" font-family="Liberation Sans" font-size="11" fill="#000" text-anchor="start" >201 - Created</text>
<text x="525" y="517" font-family="Liberation Sans" font-size="11" fill="#000" text-anchor="start" >1</text>
<text x="619" y="463" font-family="Liberation Sans" font-size="11" fill="#000" text-anchor="start" >404 - Not Found</text>
<text x="695" y="483" font-family="Liberation Sans" font-size="11" fill="#000" text-anchor="start" >1</text>
<text x="623" y="375" font-family="Liberation Sans" font-size="11" fill="#000" text-anchor="start" >403 - Forbidden</text>
<text x="695" y="395" font-family="Liberation Sans" font-size="11" fill="#000" text-anchor="start" >1</text>
<text x="621" y="313" font-family="Liberation Sans" font-size="11" fill="#000" text-anchor="start" >401 - Unauthorized</text>
<text x="693" y="291" font-family="Liberation Sans" font-size="11" fill="#000" text-anchor="start" >1</text>
<text x="865" y="291.3" font-family="Liberation Sans" font-size="11" fill="#000" text-anchor="start" >1</text>
<text x="888" y="323" font-family="Liberation Sans" font-size="9.5" fill="#000" text-anchor="start" >*</text>
<text x="864" y="328.8" font-family="Liberation Sans" font-size="11" fill="#000" text-anchor="start" >errors</text>
<text x="859.6" y="362" font-family="Liberation Sans" font-size="11" fill="#000" text-anchor="start" >1</text>
<text x="864" y="385" font-family="Liberation Sans" font-size="11" fill="#000" text-anchor="start" >errors</text>
<text x="888" y="405.2" font-family="Liberation Sans" font-size="9.5" fill="#000" text-anchor="start" >*</text>
<text x="929.7" y="420" font-family="Liberation Sans" font-size="11" fill="#000" text-anchor="start" >errors</text>
<text x="978" y="419.1" font-family="Liberation Sans" font-size="9.5" fill="#000" text-anchor="start" >*</text>
<text x="858" y="485.5" font-family="Liberation Sans" font-size="11" fill="#000" text-anchor="start" >1</text>
<text x="858" y="559" font-family="Liberation Sans" font-size="11" fill="#000" text-anchor="start" >1</text>
<text x="925" y="585.8" font-family="Liberation Sans" font-size="11" fill="#000" text-anchor="start" >200 - OK</text></svg>
</body></html>
